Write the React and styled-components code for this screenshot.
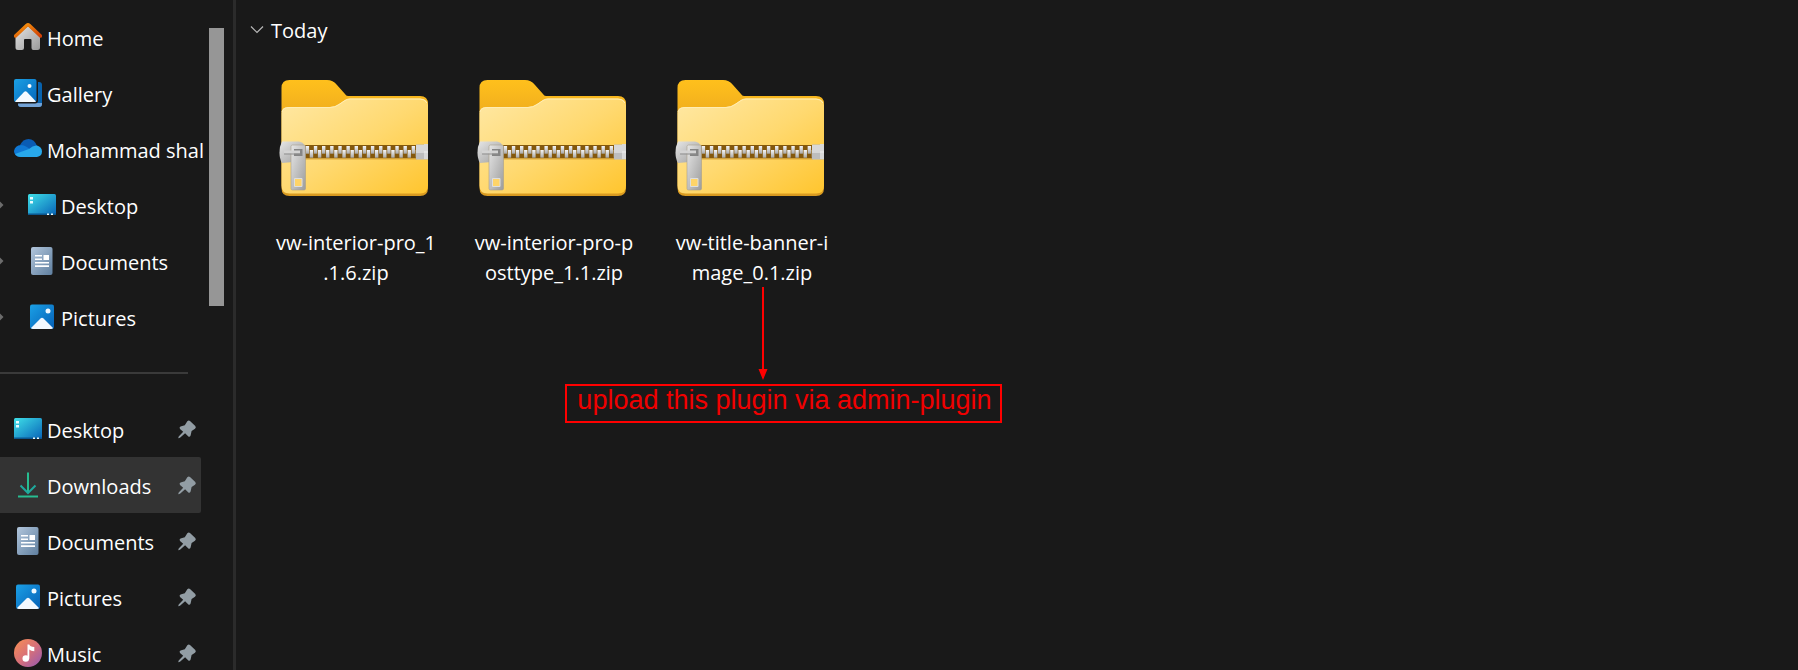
import styled, { createGlobalStyle } from "styled-components";

const GlobalStyle = createGlobalStyle`
  * {
    box-sizing: border-box;
  }
  body {
    margin: 0;
    background: #191919;
    color: #ffffff;
    font-family: "Open Sans", "Noto Sans", sans-serif;
    font-size: 20px;
    line-height: 30px;
  }
`;

const Window = styled.div`
  display: flex;
  height: 100vh;
  overflow: hidden;
`;

const Sidebar = styled.aside`
  flex: none;
  display: flex;
  width: 236px;
  border-right: 3px solid #2b2b2b;
`;

const Nav = styled.nav`
  width: 201px;
  padding-top: 9px;
`;

const NavItem = styled.a`
  display: flex;
  align-items: center;
  height: 56px;
  padding-right: 4px;
  border-radius: 0 2px 2px 0;
  background: ${(props) => (props.$active ? "#333333" : "transparent")};
  color: inherit;
  text-decoration: none;

  & > svg {
    flex: none;
    display: block;
  }
`;

const Expander = styled.span`
  flex: none;
  width: ${(props) => (props.$nested ? "28px" : "14px")};

  svg {
    display: block;
  }
`;

const NavLabel = styled.span`
  flex: 1;
  min-width: 0;
  padding: 3px 0 0 5px;
  white-space: nowrap;
`;

const Divider = styled.hr`
  width: 188px;
  height: 2px;
  margin: 27px 0;
  border: 0;
  background: #3a3a3a;
`;

const ScrollTrack = styled.div`
  flex: 1;
  padding: 28px 8px 0;
`;

const ScrollThumb = styled.div`
  width: 15px;
  height: 278px;
  background: #969696;
`;

const Main = styled.main`
  flex: 1;
  min-width: 0;
  padding: 16px 13px;
`;

const GroupToggle = styled.button`
  display: flex;
  align-items: center;
  gap: 6px;
  padding: 0;
  border: 0;
  background: none;
  color: inherit;
  font: inherit;

  svg {
    margin-bottom: 3px;
  }
`;

const Files = styled.div`
  display: flex;
  gap: 40px;
  padding: 34px 27px;
`;

const FileSlot = styled.div`
  position: relative;
  width: 158px;
`;

const FileButton = styled.button`
  display: flex;
  flex-direction: column;
  align-items: center;
  gap: 32px;
  width: 100%;
  padding: 0;
  border: 0;
  background: none;
  color: inherit;
  font: inherit;
  white-space: nowrap;
`;

const FileName = styled.span`
  padding-left: 2px;

  span {
    display: block;
  }
`;

const Annotation = styled.div`
  position: absolute;
  top: calc(100% - 1px);
  left: -107px;
  pointer-events: none;
`;

const Arrow = styled.svg`
  display: block;
  margin: 0 0 4px 193px;
`;

const Note = styled.p`
  width: 437px;
  height: 39px;
  margin: 0;
  padding-left: 2px;
  border: 2px solid #ff0000;
  color: #f00000;
  font-family: "Liberation Sans", Arial, sans-serif;
  font-size: 27px;
  line-height: 28px;
  text-align: center;
  white-space: nowrap;
`;

const HomeIcon = () => (
  <svg width="28" height="28" viewBox="0 0 28 28">
    <defs>
      <linearGradient id="homeWall" x1="0" y1="0" x2="1" y2="1">
        <stop offset="0" stopColor="#e4e4e4" />
        <stop offset="1" stopColor="#9a9a9a" />
      </linearGradient>
      <linearGradient id="homeRoof" x1="0" y1="0" x2="1" y2="1">
        <stop offset="0" stopColor="#f99a0c" />
        <stop offset="1" stopColor="#d04008" />
      </linearGradient>
    </defs>
    <path d="M14 3 1.500 14v10.500q0 2.500 2.500 2.500h4q2 0 2-2V17q0-1 1-1h5.500q1 0 1 1v8q0 2 2 2h4q2.500 0 2.500-2.500V14z" fill="url(#homeWall)" />
    <path d="M1.500 13 12.800 2.300q1.200-1 2.400 0L26.500 13" fill="none" stroke="url(#homeRoof)" strokeWidth="3.400" strokeLinecap="round" />
  </svg>
);

const GalleryIcon = () => (
  <svg width="28" height="28" viewBox="0 0 28 28">
    <defs>
      <linearGradient id="gallerySky" x1="0" y1="0" x2="1" y2="1">
        <stop offset="0" stopColor="#1ba0e4" />
        <stop offset="1" stopColor="#0668bd" />
      </linearGradient>
    </defs>
    <rect x="4" y="3" width="24" height="25" rx="3" fill="#0862ad" />
    <path d="M4 24h24v1q0 3-3 3H7q-3 0-3-3z" fill="#72a2d6" />
    <rect x="-2" y="-2" width="26" height="26.500" rx="3" fill="#191919" />
    <rect width="22.500" height="23" rx="2" fill="url(#gallerySky)" />
    <path d="M1 22.500 10 13q1.500-1.500 3 0l9 9.500-1 .5H2z" fill="#f4faff" />
    <circle cx="15.500" cy="7" r="2" fill="#fff" />
  </svg>
);

const CloudIcon = () => (
  <svg width="28" height="28" viewBox="0 0 28 28">
    <path d="M6 10Q9 4 14.500 4q6 0 8.500 7l-7 4z" fill="#0a5cb4" />
    <path d="M6.500 22Q0 21.500 0 16 1 10.500 7 10q3 0 5 1.500l8 5-9 5.500z" fill="#0f78d4" />
    <path d="M15 14q4-4 8-3.500 5 1.500 5 6t-5 5.500H7q-4 0-6-3z" fill="#28a8ea" />
  </svg>
);

const DesktopIcon = () => (
  <svg width="28" height="28" viewBox="0 0 28 28">
    <defs>
      <linearGradient id="desktopFill" x1="0" y1="0" x2="1" y2="1">
        <stop offset="0" stopColor="#3fe0e8" />
        <stop offset="1" stopColor="#0864b8" />
      </linearGradient>
    </defs>
    <rect y="3" width="28" height="21" rx="1.500" fill="url(#desktopFill)" />
    <path d="M0 22.500h28v.5q0 1-1 1H1q-1 0-1-1z" fill="#0a568e" />
    <path d="M2 6h3v2.500H2zM2 10h3v2.500H2zM19 22.500h2V24h-2zM23 22.500h2V24h-2z" fill="#e8fbff" />
  </svg>
);

const DocumentIcon = () => (
  <svg width="28" height="28" viewBox="0 0 28 28">
    <defs>
      <linearGradient id="paper" x1="0" y1="0" x2="1" y2="1">
        <stop offset="0" stopColor="#b2c6dc" />
        <stop offset="1" stopColor="#5f7f9f" />
      </linearGradient>
    </defs>
    <rect x="3" width="21.500" height="28" rx="2" fill="url(#paper)" />
    <path d="M7 8h7v1.500H7zM7 11.500h7V13H7zM15.500 8H21v5h-5.500zM7 15h14v1.500H7zM7 18.300h14v1.700H7z" fill="#fff" />
  </svg>
);

const PictureIcon = () => (
  <svg width="28" height="28" viewBox="0 0 28 28">
    <defs>
      <linearGradient id="sky" x1="0" y1="0" x2="1" y2="1">
        <stop offset="0" stopColor="#1ba0e6" />
        <stop offset="1" stopColor="#0560b6" />
      </linearGradient>
    </defs>
    <rect x="2" y="1.500" width="24" height="24.500" rx="2" fill="url(#sky)" />
    <path d="M3 25 12.500 15.500q1.500-1.500 3 0L25 25q-.5 1-2 1H5q-1.500 0-2-1z" fill="#f2f8ff" />
    <circle cx="20" cy="8" r="2.500" fill="#eef8ff" />
  </svg>
);

const DownloadIcon = () => (
  <svg width="28" height="28" viewBox="0 0 28 28" fill="none" strokeWidth="2">
    <path d="M14 1.500V22" stroke="#27bd91" />
    <path d="M6.500 14.500 14 22l7.500-7.500" stroke="#1fa99d" />
    <path d="M4 25.500h20" stroke="#27bd91" />
  </svg>
);

const MusicIcon = () => (
  <svg width="28" height="28" viewBox="0 0 28 28">
    <defs>
      <linearGradient id="disc" x1="0" y1="0" x2="1" y2="1">
        <stop offset="0.100" stopColor="#f28a5a" />
        <stop offset="0.500" stopColor="#d87078" />
        <stop offset="1" stopColor="#9258b4" />
      </linearGradient>
    </defs>
    <circle cx="14" cy="14" r="14" fill="url(#disc)" />
    <circle cx="11.800" cy="19.500" r="3.300" fill="#fff" />
    <path d="M13.500 5.500h1.800q.5 2 5 2.500v4.200q-3.500 0-5-1.700v9h-1.800z" fill="#fff" />
  </svg>
);

const PinIcon = () => (
  <svg width="20" height="20" viewBox="-1 -1 20 20">
    <path d="M9.300 1.300Q10.700-.2 12 1l5.300 5q1.200 1.500-.3 2.700L13.600 11l-1 4.500q-.9 2-2.500.7l-3-3L2 17.700l-1.800.6.500-1.800 4.500-4.700L2 9Q.9 7.300 2.500 6.400L6.800 5.300z" fill="#929da4" />
  </svg>
);

const NestedArrow = () => (
  <svg width="4" height="8" viewBox="0 0 4 8">
    <path d="M0 0.500 3.500 4 0 7.500z" fill="#6c6c6c" />
  </svg>
);

// left edge of each upper tooth; the lower row is shifted by half a step
const teeth = Array.from({ length: 14 }, (_, i) => 25.7 + i * 8.15);

const ZipFolder = () => (
  <svg width="152" height="116" viewBox="-1 0 152 116">
    <defs>
      <linearGradient id="zipBack" x1="0" y1="0" x2="0" y2="1">
        <stop offset="0" stopColor="#ffc01c" />
        <stop offset="0.250" stopColor="#f2b01e" />
        <stop offset="1" stopColor="#d99a20" />
      </linearGradient>
      <linearGradient id="zipFront" x1="0" y1="0" x2="1" y2="1">
        <stop offset="0" stopColor="#ffe8a4" />
        <stop offset="0.500" stopColor="#ffd970" />
        <stop offset="1" stopColor="#ffc52e" />
      </linearGradient>
      <linearGradient id="zipMetal" x1="0" y1="0" x2="1" y2="1">
        <stop offset="0" stopColor="#e6e6e6" />
        <stop offset="1" stopColor="#9c9c9c" />
      </linearGradient>
      <linearGradient id="zipTooth" x1="0" y1="0" x2="0" y2="1">
        <stop offset="0" stopColor="#f6f6f6" />
        <stop offset="1" stopColor="#a8a8a8" />
      </linearGradient>
    </defs>
    <path d="M1.500 8q0-8 8-8H47q6 0 10 5l8 9q1 2 3 2h72q8 0 8 8v84q0 8-8 8H9.500q-8 0-8-8z" fill="url(#zipBack)" />
    <path d="M1.500 33q0-6 7-6H50q5 0 9-3l6-4q2-1.500 5-1.500h70q8 0 8 7v80q0 8-8 8H9.500q-8 0-8-8z" fill="url(#zipFront)" />
    <path d="M2 32q1-4.500 7-4.500h41q5 0 9-3l6-4q2-1.500 5-1.500h70q5 0 7 4" fill="none" stroke="#ffedb4" />
    <rect x="25" y="65" width="112" height="13.500" fill="#84580c" />
    <path d="M25 79h112" stroke="#dca83c" />
    {teeth.map((x) => (
      <g key={x} fill="url(#zipTooth)">
        <rect x={x} y="66" width="3.400" height="7.700" />
        <rect x={x + 4.05} y="70" width="3.400" height="7.700" />
      </g>
    ))}
    <rect x="136" y="64.500" width="12" height="15" fill="#bdbdbd" />
    <path d="M136 65h9v6h-9zM144 64h4v15h-4z" fill="#d8d8d8" />
    <path d="M136 72h12" stroke="#f0f0f0" />
    <path d="M2 61.500h17q5 1 5 4v12q0 3-5 4L2 83q-2.500-4-2.500-10.500T2 61.500z" fill="url(#zipMetal)" />
    <path d="M12.500 65h11.500q1.500 0 1.500 1.500v42q0 1.500-1.500 1.500H12.500q-1.500 0-1.500-1.500v-42q0-1.500 1.500-1.500z" fill="url(#zipMetal)" stroke="#a8a08c" strokeWidth="0.600" />
    <path d="M14 69h8.500v7H14z" fill="#858585" />
    <path d="M4 70.500h16v3H4z" fill="#d4d4d4" />
    <path d="M4 74h16" stroke="#8d8d8d" />
    <path d="M14.500 98.500h7.500v8h-7.500z" fill="#ffd468" stroke="#dedede" />
  </svg>
);

const places = [
  { name: "Home", Icon: HomeIcon },
  { name: "Gallery", Icon: GalleryIcon },
  { name: "Mohammad shal", Icon: CloudIcon },
  { name: "Desktop", Icon: DesktopIcon, nested: true },
  { name: "Documents", Icon: DocumentIcon, nested: true },
  { name: "Pictures", Icon: PictureIcon, nested: true },
];

const pinned = [
  { name: "Desktop", Icon: DesktopIcon },
  { name: "Downloads", Icon: DownloadIcon, active: true },
  { name: "Documents", Icon: DocumentIcon },
  { name: "Pictures", Icon: PictureIcon },
  { name: "Music", Icon: MusicIcon },
];

const files = [
  { lines: ["vw-interior-pro_1", ".1.6.zip"] },
  { lines: ["vw-interior-pro-p", "osttype_1.1.zip"] },
  { lines: ["vw-title-banner-i", "mage_0.1.zip"], note: "upload this plugin via admin-plugin" },
];

const Place = ({ name, Icon, nested, active, pin }) => (
  <NavItem href="#" $active={active}>
    <Expander $nested={nested}>{nested && <NestedArrow />}</Expander>
    <Icon />
    <NavLabel>{name}</NavLabel>
    {pin && <PinIcon />}
  </NavItem>
);

const App = () => {
  return (
    <>
      <GlobalStyle />
      <Window>
        <Sidebar>
          <Nav>
            {places.map((place) => (
              <Place key={place.name} {...place} />
            ))}
            <Divider />
            {pinned.map((place) => (
              <Place key={place.name} {...place} pin />
            ))}
          </Nav>
          <ScrollTrack>
            <ScrollThumb />
          </ScrollTrack>
        </Sidebar>
        <Main>
          <GroupToggle>
            <svg width="16" height="16" viewBox="0 0 16 16">
              <path d="M2 4.500 8 10.500l6-6" fill="none" stroke="#b8b8b8" strokeWidth="1.200" />
            </svg>
            Today
          </GroupToggle>
          <Files>
            {files.map(({ lines, note }) => (
              <FileSlot key={lines[0]}>
                <FileButton>
                  <ZipFolder />
                  <FileName>
                    {lines.map((line) => (
                      <span key={line}>{line}</span>
                    ))}
                  </FileName>
                </FileButton>
                {note && (
                  <Annotation>
                    <Arrow width="10" height="93" viewBox="0 0 10 93">
                      <path d="M4 0h2v82h3.500L5 93 .5 82H4z" fill="#ff0000" />
                    </Arrow>
                    <Note>{note}</Note>
                  </Annotation>
                )}
              </FileSlot>
            ))}
          </Files>
        </Main>
      </Window>
    </>
  );
};

export default App;
